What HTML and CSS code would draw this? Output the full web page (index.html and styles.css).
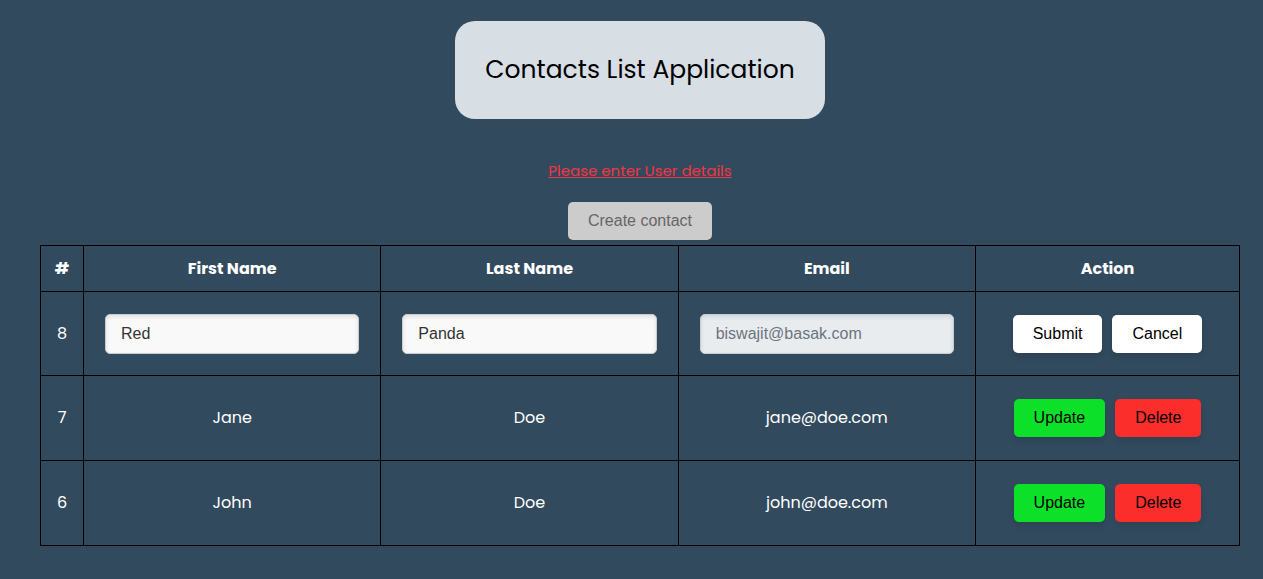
FILE: index.html
```html
<!DOCTYPE html>
<html lang="en">
<head>
  <meta charset="utf-8">
  <meta name="viewport" content="width=device-width, initial-scale=1">
  <title>Contacts List Application</title>
  <link rel="stylesheet" href="styles.css">
</head>
<body>
  <main class="app">
    <h1 class="title">Contacts List Application</h1>
    <p class="error" role="alert">Please enter User details</p>
    <button class="btn btn-create" type="button" disabled>Create contact</button>
    <table class="contacts">
      <colgroup>
        <col class="col-id"><col><col><col><col class="col-action">
      </colgroup>
      <thead>
        <tr><th>#</th><th>First Name</th><th>Last Name</th><th>Email</th><th>Action</th></tr>
      </thead>
      <tbody>
        <tr class="editing">
          <td>8</td>
          <td><input class="field" type="text" aria-label="First Name" value="Red"></td>
          <td><input class="field" type="text" aria-label="Last Name" value="Panda"></td>
          <td><input class="field" type="email" aria-label="Email" value="biswajit@basak.com" disabled></td>
          <td><div class="actions"><button class="btn" type="button">Submit</button><button class="btn" type="button">Cancel</button></div></td>
        </tr>
        <tr>
          <td>7</td><td>Jane</td><td>Doe</td><td>jane@doe.com</td>
          <td><div class="actions"><button class="btn btn-update" type="button">Update</button><button class="btn btn-delete" type="button">Delete</button></div></td>
        </tr>
        <tr>
          <td>6</td><td>John</td><td>Doe</td><td>john@doe.com</td>
          <td><div class="actions"><button class="btn btn-update" type="button">Update</button><button class="btn btn-delete" type="button">Delete</button></div></td>
        </tr>
      </tbody>
    </table>
  </main>
</body>
</html>
```
FILE: styles.css
```css
* {
  box-sizing: border-box;
}

body {
  margin: 0;
  background: #324a5e;
  color: #fff;
  font-family: Poppins, Inter, sans-serif;
  font-size: 16px;
  line-height: 24px;
}

.app {
  display: flex;
  flex-direction: column;
  align-items: center;
  padding: 21px 23px 32px 40px;
}

.title {
  margin: 0 0 40px;
  padding: 30px;
  border-radius: 20px;
  background: #d7dee4;
  color: #000;
  font-size: 25px;
  font-weight: 400;
  line-height: 38px;
}

.error {
  margin: 0 0 19px;
  color: #f23540;
  font-size: 15px;
  text-decoration: underline;
}

.btn {
  padding: 10px 20px;
  border: 0;
  border-radius: 5px;
  background: #fff;
  box-shadow: 0 4px 6px rgba(0, 0, 0, 0.1);
  color: #000;
  font-family: "Liberation Sans", Arial, sans-serif;
  font-size: 16px;
  line-height: 18px;
  cursor: pointer;
}

.btn-create {
  margin-bottom: 5px;
  background: #ccc;
  box-shadow: none;
  color: #666;
  cursor: not-allowed;
}

.btn-update {
  background: #0de028;
}

.btn-delete {
  background: #fb2e2c;
}

.contacts {
  width: 100%;
  border-collapse: collapse;
  table-layout: fixed;
  text-align: center;
}

.col-id {
  width: 43px;
}

.col-action {
  width: 264px;
}

.contacts th,
.contacts td {
  border: 1px solid #000;
}

.contacts th {
  height: 46px;
  padding: 0;
  font-weight: 700;
}

.contacts td {
  height: 85px;
  padding: 0 21px;
}

.contacts .editing td {
  height: 84px;
}

.contacts td:first-child {
  padding: 0;
}

.field {
  display: block;
  width: 100%;
  height: 40px;
  padding: 0 15px;
  border: 1px solid #ccc;
  border-radius: 5px;
  background: #f9f9f9;
  box-shadow: inset 0 2px 4px rgba(0, 0, 0, 0.1);
  color: #333;
  font-family: "Liberation Sans", Arial, sans-serif;
  font-size: 16px;
}

.field:disabled {
  background: #e9ecef;
  color: #6c757d;
}

.actions {
  display: flex;
  justify-content: center;
  gap: 10px;
}
```
